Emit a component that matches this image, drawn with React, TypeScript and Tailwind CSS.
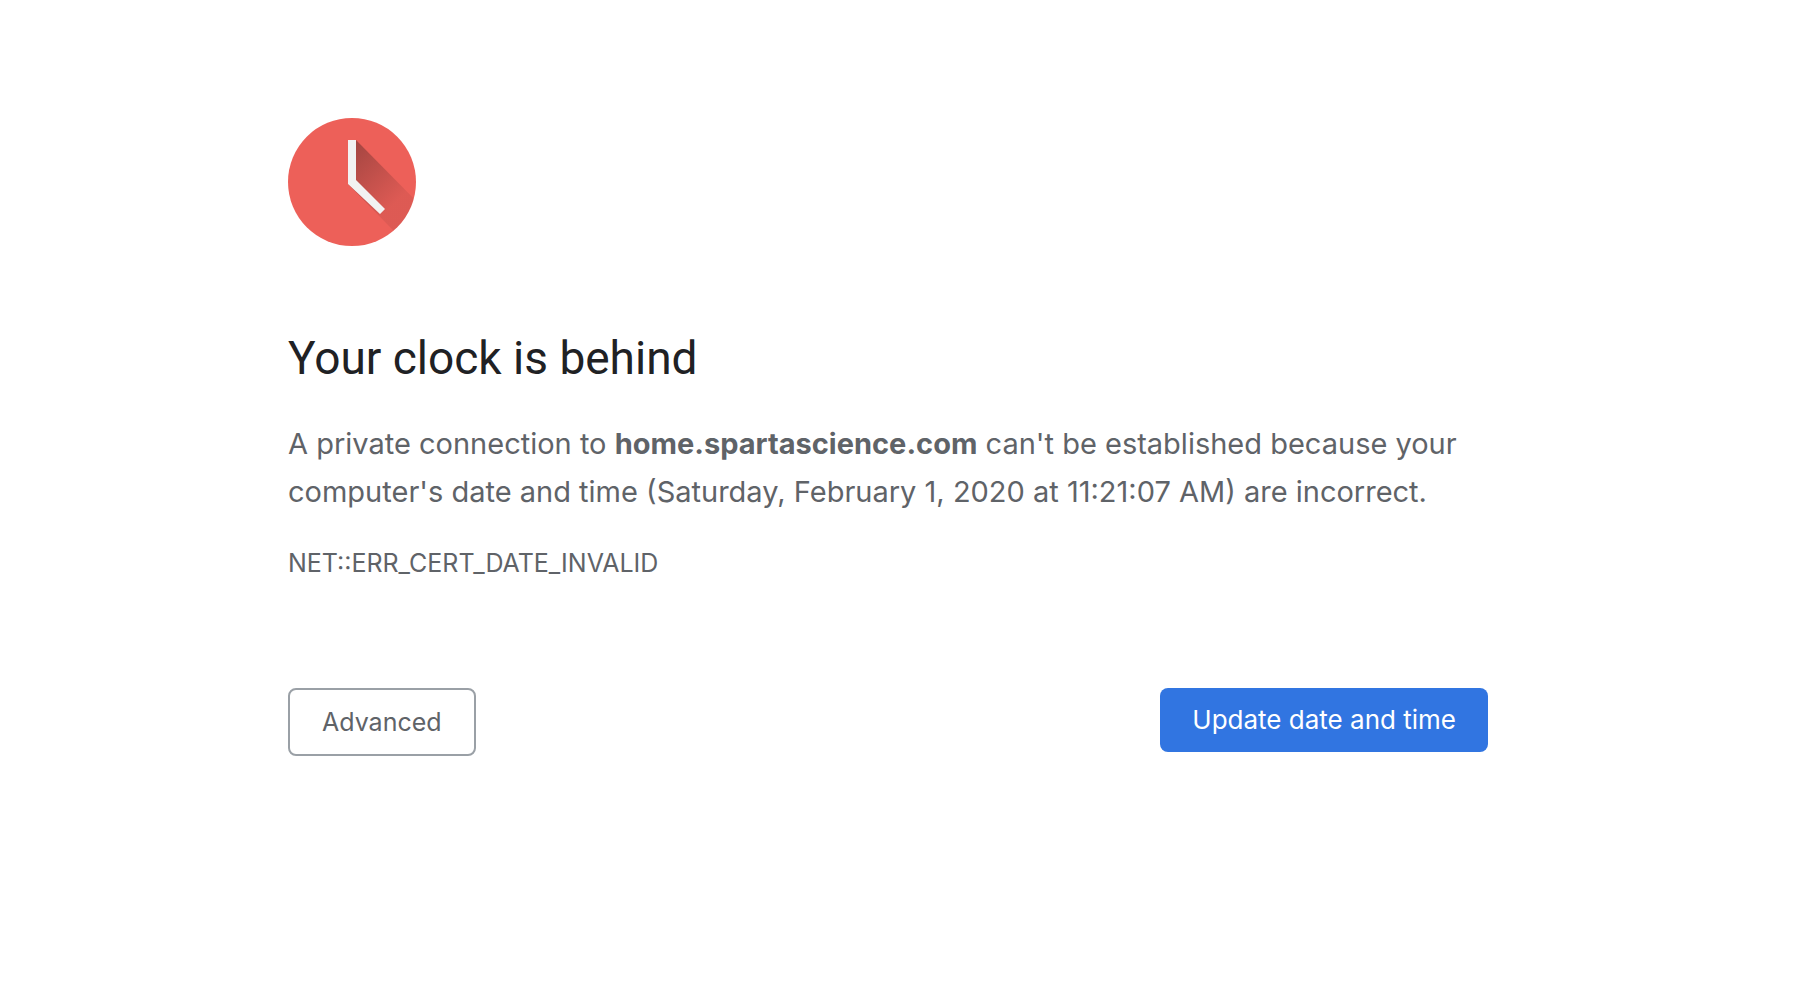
function ClockIcon() {
  return (
    <svg className="size-32" viewBox="0 0 128 128" aria-hidden="true">
      <defs>
        <clipPath id="clock-face">
          <circle cx="64" cy="64" r="64" />
        </clipPath>
        <linearGradient id="hand-shadow" gradientUnits="userSpaceOnUse" x1="58" y1="38" x2="106" y2="86">
          <stop offset="0" stopColor="#3e2020" stopOpacity="0.4" />
          <stop offset="1" stopColor="#3e2020" stopOpacity="0.09" />
        </linearGradient>
      </defs>
      <circle cx="64" cy="64" r="64" fill="#ed6059" />
      <path clipPath="url(#clock-face)" fill="url(#hand-shadow)" d="M68 22l70 71v53L60 66z" />
      <path fill="#f2f2f2" d="M60 22h8v40l29 29-5 5L60 66z" />
    </svg>
  );
}

export default function App() {
  return (
    <div className="min-h-screen bg-white pr-[18px] font-['Inter',sans-serif] text-[#5f6368]">
      <main className="mx-auto max-w-[1200px] pt-[118px]">
        <ClockIcon />

        {/* Error message */}
        <h1 className="mt-20 font-['Roboto',sans-serif] text-[46px] leading-[64px] text-[#202124]">
          Your clock is behind
        </h1>
        <p className="mt-[30px] text-[29px] leading-[48px]">
          A private connection to <strong className="font-bold">home.spartascience.com</strong> can't be established
          because your computer's date and time (Saturday, February 1, 2020 at 11:21:07 AM) are incorrect.
        </p>
        <p className="mt-6 text-[25px] leading-[46px]">NET::ERR_CERT_DATE_INVALID</p>

        {/* Actions */}
        <div className="mt-[102px] flex items-start justify-between">
          <button
            type="button"
            className="rounded-lg border-2 border-[#9aa0a6] px-8 py-4 text-[25px] leading-8"
          >
            Advanced
          </button>
          <button type="button" className="rounded-lg bg-[#3175e1] px-8 py-4 text-[26px] leading-8 text-white">
            Update date and time
          </button>
        </div>
      </main>
    </div>
  );
}
